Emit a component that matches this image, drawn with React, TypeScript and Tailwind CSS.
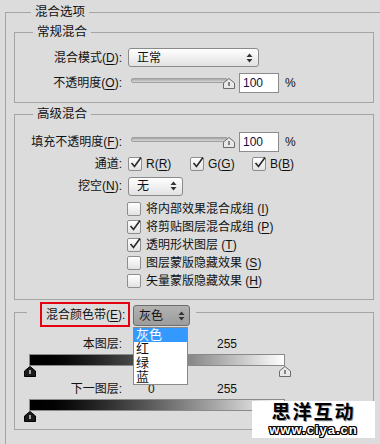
import React from "react";

const font = "font-['Liberation_Sans','Noto_Sans_CJK_SC',sans-serif]";

function Arrows() {
  return (
    <svg width="7" height="10" viewBox="0 0 7 10" className="shrink-0">
      <path d="M3.5 0.5 L6.5 4 L0.5 4 Z" fill="#333" />
      <path d="M0.5 6 L6.5 6 L3.5 9.5 Z" fill="#333" />
    </svg>
  );
}

function Thumb({ dark = false }: { dark?: boolean }) {
  return (
    <svg width="12" height="11" viewBox="0 0 12 11" className="shrink-0">
      <path
        d="M6 0.5 L11.5 5 L11.5 10.5 L0.5 10.5 L0.5 5 Z"
        fill={dark ? "#1a1a1a" : "#e8e8e8"}
        stroke={dark ? "#000" : "#6c6c6c"}
      />
      <path d="M6 4 L6 8" stroke={dark ? "#fff" : "#444"} strokeWidth="1.2" />
    </svg>
  );
}

function Checkbox({ checked = false }: { checked?: boolean }) {
  return (
    <span className="relative flex h-[14px] w-[14px] shrink-0 rounded-[2px] border border-[#8e8e8e] bg-linear-to-b from-white to-[#e2e2e2]">
      {checked && (
        <svg width="14" height="14" viewBox="0 0 14 14" className="absolute left-[0px] top-[-2px]">
          <path d="M2.5 7 L5.5 10.5 L12 1.5" fill="none" stroke="#2b2b2b" strokeWidth="1.7" />
        </svg>
      )}
    </span>
  );
}

function Slider() {
  return (
    <div className="relative h-[20px] w-[104px]">
      <div className="absolute left-[3px] top-[5px] h-[5px] w-[97px] rounded-[2px] border border-[#a0a0a0] bg-linear-to-b from-[#a6a6a6] to-[#d8d8d8]" />
      <div className="absolute left-[95px] top-[5px]">
        <Thumb />
      </div>
    </div>
  );
}

function Percent() {
  return (
    <>
      <div className="ml-[7px] flex h-[20px] w-[40px] items-center border border-[#8c8c8c] bg-white pl-[3px] text-[#101040]">
        100
      </div>
      <span className="ml-[6px]">%</span>
    </>
  );
}

function Label({ children }: { children: React.ReactNode }) {
  return <div className="w-[108px] shrink-0 pr-[1px] text-right">{children}</div>;
}

function Legend({ children, ml }: { children: React.ReactNode; ml: string }) {
  return <legend className={`${ml} px-[4px] text-[12.5px] leading-[18px]`}>{children}</legend>;
}

const u = (c: string) => <span className="underline underline-offset-2">{c}</span>;

function CheckRow({ checked, text, k }: { checked?: boolean; text: string; k: string }) {
  return (
    <div className="flex h-[18px] items-center pl-[112px]">
      <Checkbox checked={checked} />
      <span className="ml-[5px]">
        {text} ({u(k)})
      </span>
    </div>
  );
}

export default function App() {
  return (
    <div className={`relative h-[444px] w-[380px] overflow-hidden bg-[#dcdcdc] text-[12px] leading-[16px] text-[#111] ${font}`}>
      <fieldset className="ml-[5px] mt-[3px] w-[420px] border border-[#a4a4a4] pb-[40px] pl-[8px]">
        <Legend ml="ml-[17px]">混合选项</Legend>

        <fieldset className="mt-[2px] w-[360px] border border-[#a4a4a4] pb-[7px] pt-[4px]">
          <Legend ml="ml-[18px]">常规混合</Legend>
          <div className="flex h-[25px] items-center">
            <Label>混合模式({u("D")}):</Label>
            <div className="ml-[5px] flex h-[19px] w-[131px] items-center justify-between rounded-[3px] border border-[#8a8a8a] bg-linear-to-b from-white to-[#e2e2e2] pl-[8px] pr-[5px]">
              <span>正常</span>
              <Arrows />
            </div>
          </div>
          <div className="flex h-[25px] items-center">
            <Label>不透明度({u("O")}):</Label>
            <div className="ml-[5px] flex items-center">
              <Slider />
              <Percent />
            </div>
          </div>
        </fieldset>

        <fieldset className="mt-[2px] w-[360px] border border-[#a4a4a4] pb-[9px] pt-[8px]">
          <Legend ml="ml-[18px]">高级混合</Legend>
          <div className="flex h-[22px] items-center">
            <Label>填充不透明度({u("F")}):</Label>
            <div className="ml-[5px] flex items-center">
              <Slider />
              <Percent />
            </div>
          </div>
          <div className="flex h-[22px] items-center">
            <Label>通道:</Label>
            <div className="ml-[5px] flex items-center">
              {["R", "G", "B"].map((c) => (
                <div key={c} className="flex w-[62px] items-center">
                  <Checkbox checked />
                  <span className="ml-[4px]">
                    {c}({u(c)})
                  </span>
                </div>
              ))}
            </div>
          </div>
          <div className="flex h-[22px] items-center">
            <Label>挖空({u("N")}):</Label>
            <div className="ml-[5px] flex h-[19px] w-[55px] items-center justify-between rounded-[3px] border border-[#8a8a8a] bg-linear-to-b from-white to-[#e2e2e2] pl-[8px] pr-[5px]">
              <span>无</span>
              <Arrows />
            </div>
          </div>
          <div className="mt-[3px]">
            <CheckRow text="将内部效果混合成组" k="I" />
            <CheckRow checked text="将剪贴图层混合成组" k="P" />
            <CheckRow checked text="透明形状图层" k="T" />
            <CheckRow text="图层蒙版隐藏效果" k="S" />
            <CheckRow text="矢量蒙版隐藏效果" k="H" />
          </div>
        </fieldset>

        <fieldset className="mt-[2px] w-[360px] border border-[#a4a4a4] pb-[8px] pt-[13px]">
          <legend className="ml-[12px] pl-[13px] pr-[6px]">
            <div className="flex h-[20px] items-start">
              <div className="flex h-[25px] w-[90px] shrink-0 items-center border-2 border-[#e50012] pl-[4px]">
                混合颜色带({u("E")}):
              </div>
              <div className="relative ml-[3px] mt-[3px]">
                <div className="flex h-[21px] w-[57px] items-center justify-between rounded-[3px] border border-[#6e6e6e] bg-linear-to-b from-[#b2b2b2] to-[#9c9c9c] pl-[5px] pr-[4px]">
                  <span>灰色</span>
                  <Arrows />
                </div>
                <ul className="absolute left-0 top-[22px] z-10 w-[55px] border border-[#8a8a8a] bg-white text-[13px] leading-[14px]">
                  <li className="bg-[#3399ff] pl-[2px] text-white">灰色</li>
                  <li className="pl-[2px]">红</li>
                  <li className="pl-[2px]">绿</li>
                  <li className="pl-[2px]">蓝</li>
                </ul>
              </div>
            </div>
          </legend>

          <div className="flex h-[18px] items-center">
            <Label>本图层:</Label>
            <span className="ml-[25px] w-[69px]">0</span>
            <span>255</span>
          </div>
          <div className="ml-[14px] mt-[1px] h-[12px] w-[256px] border border-[#8a8a8a] bg-linear-to-r from-black to-white" />
          <div className="ml-[9px] flex h-[10px] w-[267px] justify-between">
            <Thumb dark />
            <Thumb />
          </div>

          <div className="mt-[4px] flex h-[18px] items-center">
            <Label>下一图层:</Label>
            <span className="ml-[25px] w-[69px]">0</span>
            <span>255</span>
          </div>
          <div className="ml-[14px] mt-[1px] h-[12px] w-[256px] border border-[#8a8a8a] bg-linear-to-r from-black to-white" />
          <div className="ml-[9px] flex h-[10px] w-[267px] justify-between">
            <Thumb dark />
            <Thumb />
          </div>
        </fieldset>
      </fieldset>

      <div className="absolute left-[252px] top-[401px] flex h-[37px] w-[123px] flex-col items-center justify-center bg-white">
        <div className="text-[19px] font-bold leading-[20px] tracking-[2px] text-black [text-shadow:1px_1px_0_#999]">
          思洋互动
        </div>
        <div className="text-[13px] font-bold leading-[14px] tracking-[1px] text-white [text-shadow:1px_0_0_#000,-1px_0_0_#000,0_1px_0_#000,0_-1px_0_#000,1px_1px_0_#000,-1px_-1px_0_#000,1px_-1px_0_#000,-1px_1px_0_#000]">
          www.ciya.cn
        </div>
      </div>
    </div>
  );
}
